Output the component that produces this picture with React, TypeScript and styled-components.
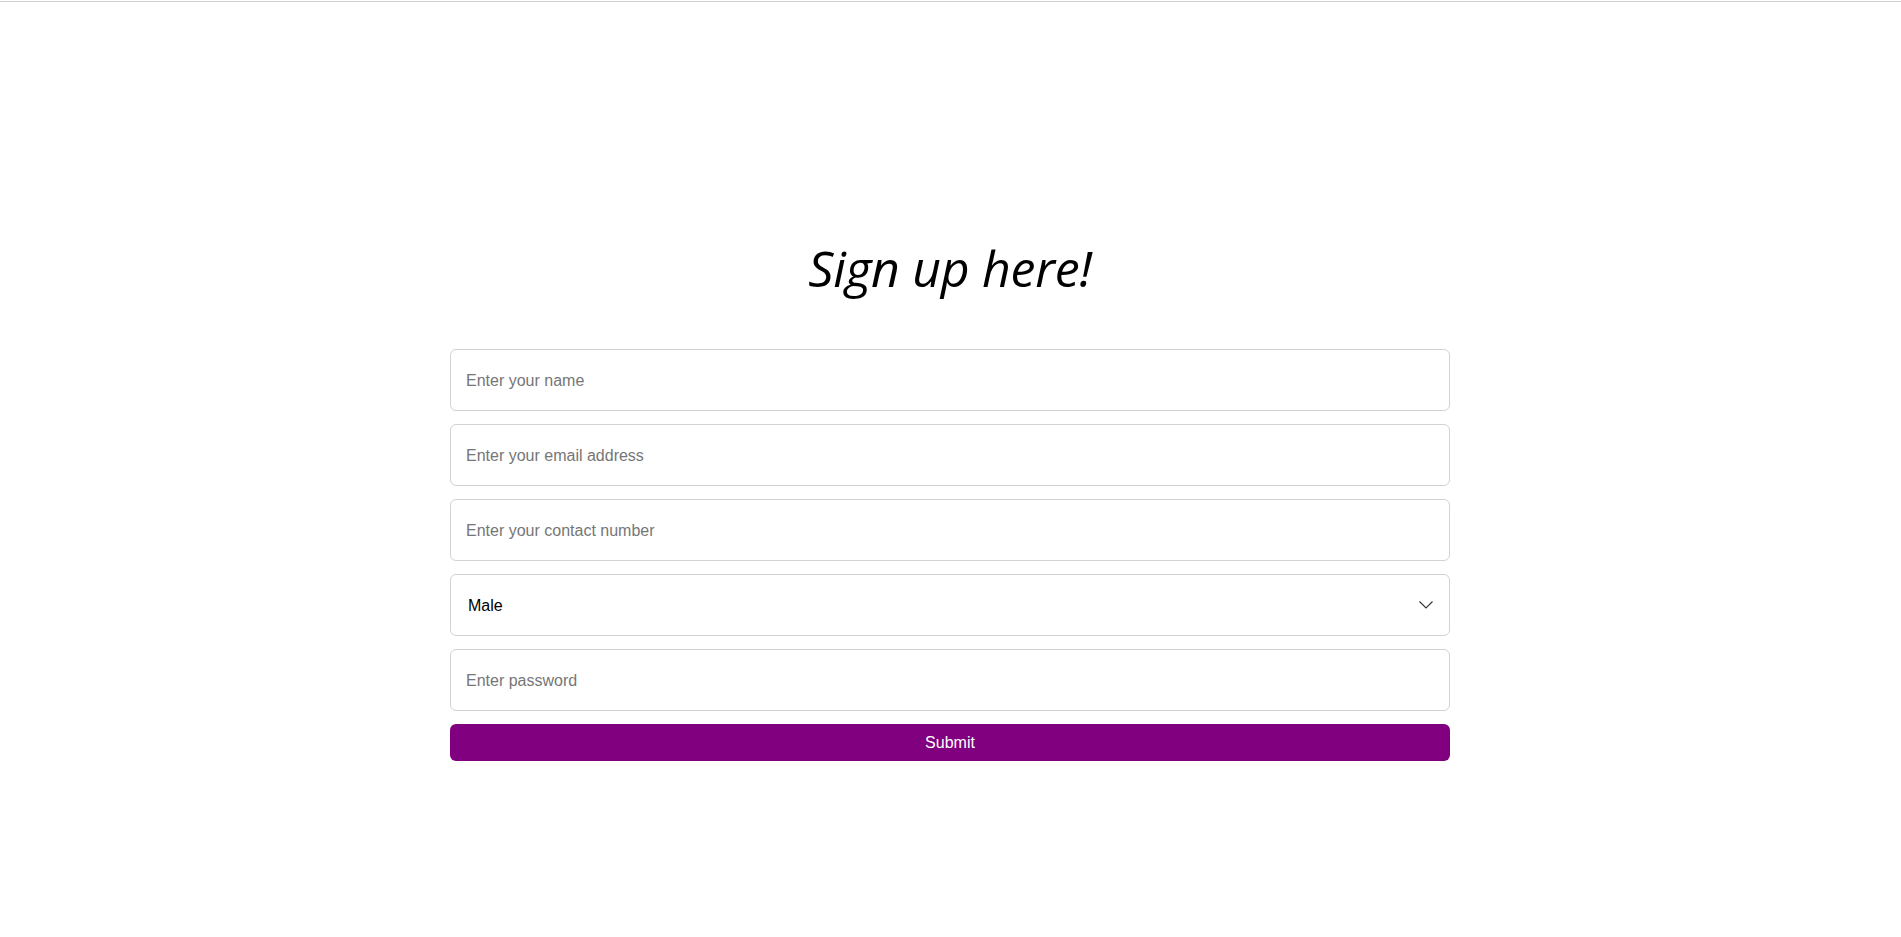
import React from "react";
import styled, { createGlobalStyle } from "styled-components";

const Global = createGlobalStyle`
  html, body { margin: 0; padding: 0; background: #fff; }
  body { font-family: "Liberation Sans", Arial, sans-serif; }
  * { box-sizing: border-box; }
`;

const TopRule = styled.div`
  height: 1px;
  margin-top: 1px;
  background: #cfcfcf;
`;

const Page = styled.main`
  display: flex;
  flex-direction: column;
  align-items: center;
  padding-top: 232px;
  padding-right: 1px;
`;

const Title = styled.h1`
  margin: 0 0 47px;
  font-family: "Open Sans", "Noto Sans", sans-serif;
  font-style: italic;
  font-weight: 400;
  font-size: 50px;
  color: #000;
  letter-spacing: -0.3px;
`;

const Form = styled.form`
  width: 1000px;
  display: flex;
  flex-direction: column;
  gap: 13px;
`;

const Field = styled.input`
  height: 62px;
  width: 100%;
  border: 1px solid #d3d3d3;
  border-radius: 6px;
  padding: 1px 15px 0;
  font-family: "Liberation Sans", Arial, sans-serif;
  font-size: 16px;
  color: #000;
  outline: none;
  &::placeholder { color: #767676; }
`;

const SelectWrap = styled.div`
  position: relative;
  height: 62px;
`;

const Select = styled.select`
  appearance: none;
  width: 100%;
  height: 100%;
  border: 1px solid #d3d3d3;
  border-radius: 6px;
  padding: 0 17px;
  background: #fff;
  font-family: "Liberation Sans", Arial, sans-serif;
  font-size: 16px;
  color: #000;
  outline: none;
`;

const Chevron = styled.svg`
  position: absolute;
  right: 17px;
  top: 27px;
  pointer-events: none;
`;

const Submit = styled.button`
  height: 37px;
  width: 100%;
  border: none;
  border-radius: 6px;
  background: #800080;
  color: #fff;
  font-family: "Liberation Sans", Arial, sans-serif;
  font-size: 16px;
  cursor: pointer;
`;

export default function App() {
  return (
    <>
      <Global />
      <TopRule />
      <Page>
        <Title>Sign up here!</Title>
        <Form onSubmit={(e) => e.preventDefault()}>
          <Field type="text" placeholder="Enter your name" />
          <Field type="email" placeholder="Enter your email address" />
          <Field type="tel" placeholder="Enter your contact number" />
          <SelectWrap>
            <Select defaultValue="Male">
              <option>Male</option>
              <option>Female</option>
              <option>Other</option>
            </Select>
            <Chevron width="14" height="8" viewBox="0 0 14 8">
              <path d="M0.5 0.5 L7 7 L13.5 0.5" fill="none" stroke="#333" strokeWidth="1.1" />
            </Chevron>
          </SelectWrap>
          <Field type="password" placeholder="Enter password" />
          <Submit type="submit">Submit</Submit>
        </Form>
      </Page>
    </>
  );
}
